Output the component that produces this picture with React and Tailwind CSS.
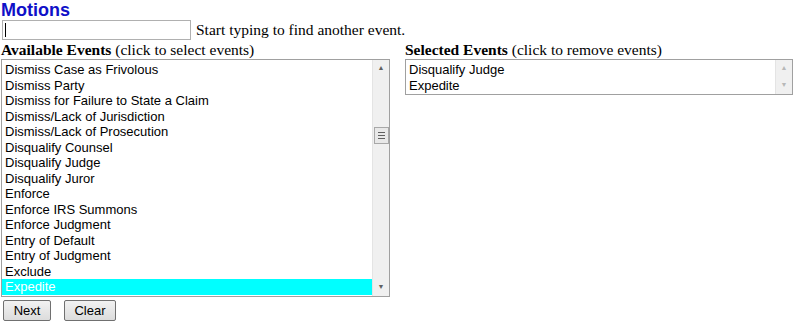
import React from "react";

const available = [
  "Dismiss Case as Frivolous",
  "Dismiss Party",
  "Dismiss for Failure to State a Claim",
  "Dismiss/Lack of Jurisdiction",
  "Dismiss/Lack of Prosecution",
  "Disqualify Counsel",
  "Disqualify Judge",
  "Disqualify Juror",
  "Enforce",
  "Enforce IRS Summons",
  "Enforce Judgment",
  "Entry of Default",
  "Entry of Judgment",
  "Exclude",
  "Expedite",
];

const selected = ["Disqualify Judge", "Expedite"];

// fake windows-style scrollbar
const ScrollBar = ({ thumb, dim }) => (
  <div className="w-[17px] shrink-0 bg-[#f0f0f0] border-l border-[#e4e4e4] flex flex-col items-center">
    <div className={"h-[17px] flex items-center justify-center text-[7px] " + (dim ? "text-[#b8b8b8]" : "text-[#606060]")}>
      ▲
    </div>
    <div className="flex-1 w-full flex flex-col items-center">
      {thumb && (
        <div className="mt-[50px] w-[15px] h-[17px] bg-[#e8e8e8] border border-[#a8a8a8] flex flex-col items-center justify-center gap-[2px]">
          <div className="w-[7px] h-px bg-[#606060]" />
          <div className="w-[7px] h-px bg-[#606060]" />
          <div className="w-[7px] h-px bg-[#606060]" />
        </div>
      )}
    </div>
    <div className={"h-[17px] flex items-center justify-center text-[7px] " + (dim ? "text-[#b8b8b8]" : "text-[#606060]")}>
      ▼
    </div>
  </div>
);

const App = () => {
  return (
    <div className="w-[800px] h-[323px] bg-white overflow-hidden text-black font-['Liberation_Serif',serif]">
      {/* title */}
      <h1 className="text-[#1010c8] font-bold text-[18px] leading-[20px] pl-[1px] font-['Liberation_Sans',Arial,sans-serif]">
        Motions
      </h1>

      {/* search row */}
      <div className="flex items-center h-[20px] mt-[0px]">
        <div className="ml-[2px] w-[189px] h-[20px] border border-[#b0b0b0] bg-white flex items-center">
          <div className="ml-[2px] w-px h-[14px] bg-black" />
        </div>
        <span className="ml-[5px] text-[15.5px] leading-[18px]">
          Start typing to find another event.
        </span>
      </div>

      <div className="flex mt-[1px]">
        {/* available */}
        <div className="w-[404px] shrink-0">
          <div className="text-[15.5px] leading-[18px] pl-[1px]">
            <b>Available Events</b> (click to select events)
          </div>
          <div className="ml-[1px] w-[389px] h-[238px] border border-[#a0a0a0] flex">
            <div className="flex-1 pt-[2px] font-['Liberation_Sans',Arial,sans-serif] text-[13px]">
              {available.map((e) => (
                <div
                  key={e}
                  className={
                    "h-[15.5px] leading-[15.5px] pl-[3px] " +
                    (e === "Expedite" ? "bg-[#00ffff] text-white" : "")
                  }
                >
                  {e}
                </div>
              ))}
            </div>
            <ScrollBar thumb />
          </div>
        </div>

        {/* selected */}
        <div className="flex-1">
          <div className="text-[15.5px] leading-[18px] pl-[1px]">
            <b>Selected Events</b> (click to remove events)
          </div>
          <div className="ml-[1px] w-[388px] h-[36px] border border-[#a0a0a0] flex">
            <div className="flex-1 pt-[2px] font-['Liberation_Sans',Arial,sans-serif] text-[13px]">
              {selected.map((e) => (
                <div key={e} className="h-[15.5px] leading-[15.5px] pl-[3px]">
                  {e}
                </div>
              ))}
            </div>
            <ScrollBar dim />
          </div>
        </div>
      </div>

      {/* buttons */}
      <div className="flex gap-[13px] mt-[3px] ml-[3px] font-['Liberation_Sans',Arial,sans-serif] text-[13px]">
        <button className="w-[48px] h-[21px] border border-[#707070] rounded-[2px] bg-gradient-to-b from-[#f2f2f2] to-[#dcdcdc] leading-none">
          Next
        </button>
        <button className="w-[52px] h-[21px] border border-[#707070] rounded-[2px] bg-gradient-to-b from-[#f2f2f2] to-[#dcdcdc] leading-none">
          Clear
        </button>
      </div>
    </div>
  );
};

export default App;
